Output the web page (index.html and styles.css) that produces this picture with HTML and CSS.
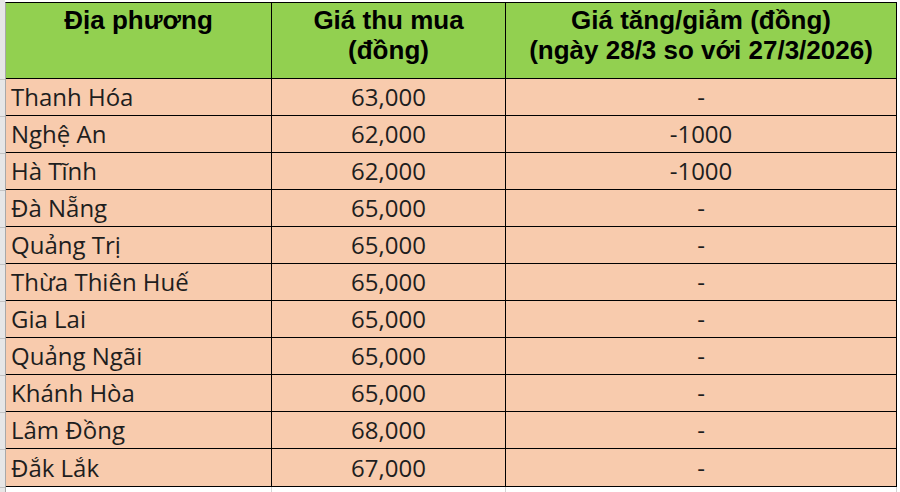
FILE: index.html
```html
<!DOCTYPE html>
<html lang="vi">
<head>
<meta charset="utf-8">
<link rel="stylesheet" href="styles.css">
</head>
<body>
<div class="sheet">
  <div class="strip">
    <div class="rh rh-top"></div>
    <div class="rh rh-head"></div>
    <div class="rh"></div><div class="rh"></div><div class="rh"></div><div class="rh"></div>
    <div class="rh"></div><div class="rh"></div><div class="rh"></div><div class="rh"></div>
    <div class="rh"></div><div class="rh"></div><div class="rh rh-last"></div>
  </div>
  <table class="grid">
    <colgroup>
      <col class="c1"><col class="c2"><col class="c3">
    </colgroup>
    <thead>
      <tr class="head">
        <th>Địa phương</th>
        <th>Giá thu mua<br>(đồng)</th>
        <th>Giá tăng/giảm (đồng)<br>(ngày 28/3 so với 27/3/2026)</th>
      </tr>
    </thead>
    <tbody>
      <tr><td class="name">Thanh Hóa</td><td class="num">63,000</td><td class="num">-</td></tr>
      <tr><td class="name">Nghệ An</td><td class="num">62,000</td><td class="num">-1000</td></tr>
      <tr><td class="name">Hà Tĩnh</td><td class="num">62,000</td><td class="num">-1000</td></tr>
      <tr><td class="name">Đà Nẵng</td><td class="num">65,000</td><td class="num">-</td></tr>
      <tr><td class="name">Quảng Trị</td><td class="num">65,000</td><td class="num">-</td></tr>
      <tr><td class="name">Thừa Thiên Huế</td><td class="num">65,000</td><td class="num">-</td></tr>
      <tr><td class="name">Gia Lai</td><td class="num">65,000</td><td class="num">-</td></tr>
      <tr><td class="name">Quảng Ngãi</td><td class="num">65,000</td><td class="num">-</td></tr>
      <tr><td class="name">Khánh Hòa</td><td class="num">65,000</td><td class="num">-</td></tr>
      <tr><td class="name">Lâm Đồng</td><td class="num">68,000</td><td class="num">-</td></tr>
      <tr class="last"><td class="name">Đắk Lắk</td><td class="num">67,000</td><td class="num">-</td></tr>
      <tr class="ghost"><td></td><td></td><td></td></tr>
    </tbody>
  </table>
</div>
</body>
</html>
```
FILE: styles.css
```css
html, body {
  margin: 0;
  padding: 0;
  background: #ffffff;
  width: 900px;
  height: 492px;
  overflow: hidden;
}

.sheet {
  display: flex;
  align-items: flex-start;
}

.strip {
  width: 5px;
  height: 492px;
  background: #e6e6e6;
  display: flex;
  flex-direction: column;
}

.rh {
  height: 36px;
  border-bottom: 1px solid #c4c4c4;
  flex: none;
}
.rh-top { height: 2px; border-bottom: none; }
.rh-head { height: 77px; }
.rh-last { height: 37px; }

.grid {
  border-collapse: separate;
  border-spacing: 0;
  margin-top: 2px;
  border-top: 1px solid #000;
  border-left: 1px solid #a8a8a8;
  table-layout: fixed;
  width: 892px;
}

.c1 { width: 266px; }
.c2 { width: 234px; }
.c3 { width: 391px; }

.grid th,
.grid td {
  border-right: 1px solid #000;
  border-bottom: 1px solid #000;
  padding: 0;
}

.head th {
  background: #92d050;
  height: 76px;
  vertical-align: top;
  text-align: center;
  font-family: "Liberation Sans", Arial, sans-serif;
  font-weight: bold;
  font-size: 26px;
  line-height: 30px;
  color: #000;
  padding-top: 2px;
  box-sizing: border-box;
}

.grid td {
  background: #f8cbad;
  height: 36px;
  font-family: "Open Sans", "Noto Sans", sans-serif;
  font-size: 24px;
  line-height: 36px;
  color: #1e1e1e;
  white-space: nowrap;
  vertical-align: middle;
}

.grid tr.last td {
  height: 37px;
}

.grid td.name {
  text-align: left;
  padding-left: 5px;
}

.grid td.num {
  text-align: center;
}

.grid tr.ghost td {
  background: #ffffff;
  height: 8px;
  line-height: 8px;
  border-bottom: none;
  border-right: 1px solid #d4d4d4;
}
```
